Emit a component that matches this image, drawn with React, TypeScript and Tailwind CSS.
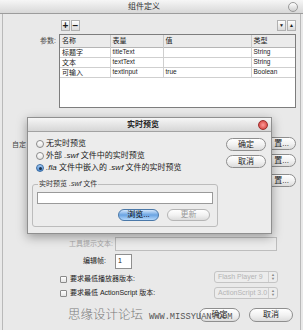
import React from 'react'

const rows = [
  { name: '标题字', variable: 'titleText', value: '', type: 'String' },
  { name: '文本', variable: 'textText', value: '', type: 'String' },
  { name: '可输入', variable: 'textInput', value: 'true', type: 'Boolean' },
]

function Pill({ children, className = '', blue = false, dim = false }: { children: React.ReactNode; className?: string; blue?: boolean; dim?: boolean }) {
  return (
    <div
      className={
        'flex items-center justify-center rounded-full border text-[8px] leading-none ' +
        (blue
          ? 'border-[#4a78a8] bg-linear-to-b from-[#d3e6fb] via-[#6aa4e2] to-[#b5d8fb] text-black '
          : 'border-[#8e8e8e] bg-linear-to-b from-white via-[#f2f2f2] to-[#dcdcdc] ') +
        (dim ? 'text-[#9a9a9a] border-[#b5b5b5] ' : 'text-[#222] ') +
        className
      }
    >
      {children}
    </div>
  )
}

function Radio({ checked = false }: { checked?: boolean }) {
  return checked ? (
    <span className="flex h-[8px] w-[8px] items-center justify-center rounded-full border border-[#3d6da3] bg-linear-to-b from-[#a7cdf5] to-[#4b8ad0]">
      <span className="h-[3px] w-[3px] rounded-full bg-[#1c2f48]" />
    </span>
  ) : (
    <span className="h-[8px] w-[8px] rounded-full border border-[#8a8a8a] bg-linear-to-b from-white to-[#e4e4e4]" />
  )
}

function Select({ label }: { label: string }) {
  return (
    <div className="flex h-[12px] w-[64px] items-center rounded-[3px] border border-[#c4c4c4] bg-[#ececec] text-[7px] text-[#b4b4b4]">
      <span className="flex-1 truncate pl-[3px]">{label}</span>
      <span className="flex h-full w-[9px] flex-col items-center justify-center border-l border-[#cfcfcf] text-[4px] leading-[4px] text-[#888]">
        <span>▲</span>
        <span>▼</span>
      </span>
    </div>
  )
}

export default function App() {
  return (
    <div className="relative h-[330px] w-[303px] overflow-hidden bg-[#e9e9e9] font-['Liberation_Sans','Noto_Sans_CJK_SC',sans-serif] text-[8px] text-[#1a1a1a]">
      {/* window title */}
      <div className="flex h-[14px] items-center border-b border-[#9c9c9c] bg-linear-to-b from-[#f6f6f6] to-[#d8d8d8]">
        <span className="flex-1 text-center text-[8px] text-[#333]">组件定义</span>
        <span className="mr-[5px] h-[10px] w-[10px] rounded-full border border-[#9a9a9a] bg-linear-to-b from-white to-[#cfcfcf]" />
      </div>

      <div className="mx-[2px] flex h-[316px] flex-col border-x border-[#b9b9b9]">
        {/* toolbar */}
        <div className="mt-[6px] flex h-[11px]">
          <div className="ml-[58px] flex gap-[1px]">
            <span className="flex h-[11px] w-[9px] items-center justify-center border border-[#b0b0b0] bg-linear-to-b from-white to-[#dadada] text-[10px] font-bold leading-none">+</span>
            <span className="flex h-[11px] w-[9px] items-center justify-center border border-[#b0b0b0] bg-linear-to-b from-white to-[#dadada] text-[10px] font-bold leading-none">−</span>
          </div>
          <div className="ml-auto mr-[4px] flex gap-[1px]">
            <span className="flex h-[11px] w-[9px] items-center justify-center border border-[#b0b0b0] bg-linear-to-b from-white to-[#dadada] text-[5px] leading-none">▼</span>
            <span className="flex h-[11px] w-[9px] items-center justify-center border border-[#b0b0b0] bg-linear-to-b from-white to-[#dadada] text-[5px] leading-none">▲</span>
          </div>
        </div>

        {/* params table */}
        <div className="mt-[3px] flex">
          <span className="w-[53px] pt-[2px] text-right text-[7px] text-[#444]">参数:</span>
          <div className="ml-[3px] h-[74px] w-[237px] border border-[#7d7d7d] bg-white">
            <table className="w-full border-collapse text-[7px] leading-none">
              <thead>
                <tr className="h-[12px] border-b border-[#b5b5b5] bg-[#ebebeb]">
                  <th className="w-[50px] border-r border-[#c8c8c8] pl-[2px] text-left font-normal">名称</th>
                  <th className="w-[53px] border-r border-[#c8c8c8] pl-[2px] text-left font-normal">表量</th>
                  <th className="w-[88px] border-r border-[#c8c8c8] pl-[2px] text-left font-normal">值</th>
                  <th className="pl-[2px] text-left font-normal">类型</th>
                </tr>
              </thead>
              <tbody>
                {rows.map(r => (
                  <tr key={r.variable} className="h-[10px] border-b border-[#cfcfcf]">
                    <td className="border-r border-[#cfcfcf] pl-[2px]">{r.name}</td>
                    <td className="border-r border-[#cfcfcf] pl-[2px] text-[6.5px]">{r.variable}</td>
                    <td className="border-r border-[#cfcfcf] pl-[2px] text-[6.5px]">{r.value}</td>
                    <td className="pl-[2px] text-[6.5px]">{r.type}</td>
                  </tr>
                ))}
              </tbody>
            </table>
          </div>
        </div>

        {/* hidden custom UI row */}
        <div className="mt-[29px] flex">
          <span className="ml-[9px] mt-[3px] text-[7px] text-[#444]">自定</span>
          <div className="ml-auto mr-[4px] flex flex-col gap-[4px]">
            <Pill className="h-[13px] w-[50px] justify-end pr-[6px]">置...</Pill>
            <Pill className="h-[13px] w-[50px] justify-end pr-[6px]">置...</Pill>
            <Pill className="mt-[3px] h-[13px] w-[50px] justify-end pr-[6px]">置...</Pill>
          </div>
        </div>

        {/* tooltip text */}
        <div className="mt-[50px] flex h-[14px] items-center">
          <span className="w-[110px] text-right text-[7px] text-[#a8a8a8]">工具提示文本:</span>
          <div className="ml-[2px] h-[14px] w-[162px] border border-[#bdbdbd] bg-[#ececec]" />
        </div>

        {/* edit frame */}
        <div className="mt-[3px] flex h-[15px] items-center">
          <span className="w-[103px] text-right text-[7px]">编辑帧:</span>
          <div className="ml-[9px] flex h-[15px] w-[17px] items-center border border-[#8f8f8f] bg-white pl-[2px] text-[7px]">1</div>
        </div>

        {/* min versions */}
        <div className="mt-[2px] flex h-[12px] items-center">
          <span className="ml-[57px] mt-[4px] h-[7px] w-[7px] rounded-[1px] border border-[#8a8a8a] bg-linear-to-b from-white to-[#e4e4e4]" />
          <span className="ml-[3px] mt-[4px] text-[7px]">要求最低播放器版本:</span>
          <div className="ml-auto mr-[22px]">
            <Select label="Flash Player 9" />
          </div>
        </div>
        <div className="mt-[4px] flex h-[12px] items-center">
          <span className="ml-[57px] h-[7px] w-[7px] rounded-[1px] border border-[#8a8a8a] bg-linear-to-b from-white to-[#e4e4e4]" />
          <span className="ml-[3px] text-[7px]">要求最低 ActionScript 版本:</span>
          <div className="ml-auto mr-[22px]">
            <Select label="ActionScript 3.0" />
          </div>
        </div>

        {/* bottom buttons */}
        <div className="mt-[9px] flex gap-[9px] pl-[196px]">
          <Pill className="h-[14px] w-[41px]">确定</Pill>
          <Pill className="h-[14px] w-[44px]">取消</Pill>
        </div>
      </div>

      {/* watermark */}
      <div className="absolute left-[68px] top-[306px] flex items-baseline gap-[6px]">
        <span className="text-[12.5px] font-light text-[#7a7a7a]">思缘设计论坛</span>
        <span className="font-['Liberation_Mono',monospace] text-[8.7px] text-[#555]">WWW.MISSYUAN.COM</span>
      </div>

      {/* live preview dialog */}
      <div className="absolute left-[27px] top-[117px] h-[117px] w-[245px] border border-[#8f8f8f] bg-[#ececec] shadow-[0_3px_10px_rgba(0,0,0,0.35)]">
        <div className="flex h-[14px] items-center border-b border-[#a2a2a2] bg-linear-to-b from-[#f6f6f6] to-[#d6d6d6]">
          <span className="flex-1 text-center text-[8px] font-bold text-[#222]">实时预览</span>
          <span className="mr-[3px] h-[10px] w-[10px] rounded-full border border-[#9b2e2e] bg-radial from-[#ff9a9a] to-[#c8282a]" />
        </div>
        <div className="flex">
          <div className="flex flex-col">
            <div className="pt-[6px]">
              <div className="flex h-[12px] items-center gap-[2px] pl-[8px] text-[8px]">
                <Radio />
                <span>无实时预览</span>
              </div>
              <div className="flex h-[12px] items-center gap-[2px] pl-[8px] text-[8px]">
                <Radio />
                <span>外部 <i>.swf</i> 文件中的实时预览</span>
              </div>
              <div className="flex h-[12px] items-center gap-[2px] pl-[8px] text-[8px]">
                <Radio checked />
                <span><i>.fla</i> 文件中嵌入的 <i>.swf</i> 文件的实时预览</span>
              </div>
            </div>
            <fieldset className="ml-[4px] mt-[5px] w-[186px] rounded-[3px] border border-[#bcbcbc] px-[4px] pb-[5px]">
              <legend className="ml-[1px] px-[1px] text-[7px] leading-[10px] text-[#333]">实时预览 <i>.swf</i> 文件</legend>
              <div className="mt-[3px] h-[12px] w-[176px] border border-[#9a9a9a] bg-white" />
              <div className="mt-[5px] flex justify-end gap-[8px] pr-[3px]">
                <Pill blue className="h-[12px] w-[41px]">浏览...</Pill>
                <Pill dim className="h-[12px] w-[43px]">更新</Pill>
              </div>
            </fieldset>
          </div>
          <div className="ml-auto mr-[5px] mt-[6px] flex flex-col gap-[4px]">
            <Pill className="h-[13px] w-[40px]">确定</Pill>
            <Pill className="h-[13px] w-[40px]">取消</Pill>
          </div>
        </div>
      </div>
    </div>
  )
}
